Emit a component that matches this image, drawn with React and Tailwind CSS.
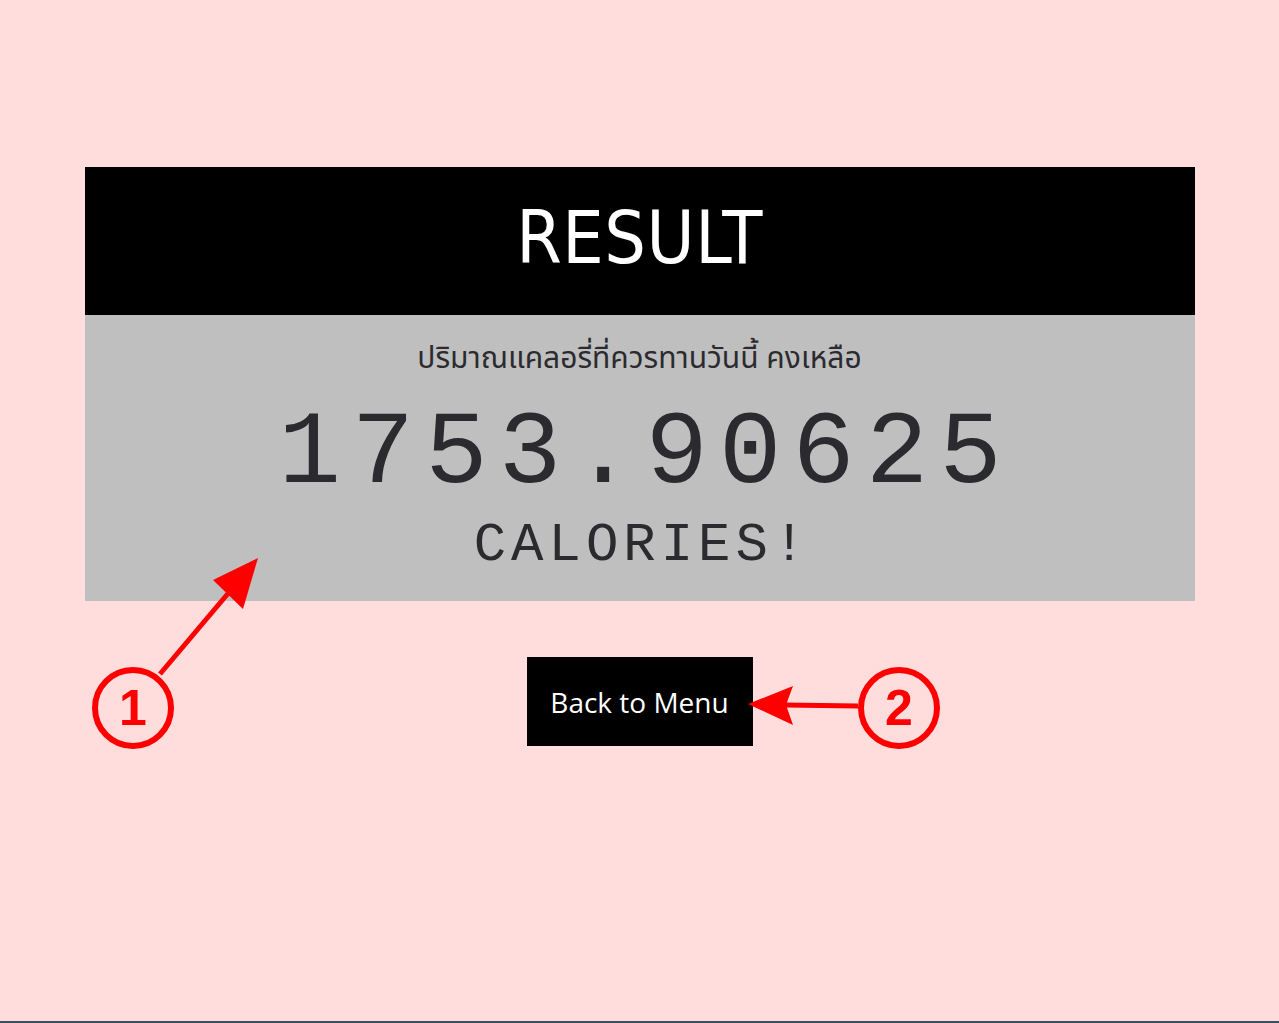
import { useState } from 'react'

const result = 1753.90625

function Marker({ n, className }) {
  return (
    <div className={`absolute flex h-[82px] w-[82px] items-center justify-center rounded-full border-[6px] border-[#ff0000] ${className}`}>
      <span className="text-[50px] font-bold leading-none text-[#ff0000]" style={{ fontFamily: '"Liberation Sans", sans-serif' }}>{n}</span>
    </div>
  )
}

export default function App() {
  const [calories] = useState(result)

  return (
    <div className="relative flex h-[1023px] flex-col bg-[#ffdddd]">
      <div className="flex-1 pt-[167px]">
        <div className="mx-auto w-[1110px]">
          <div className="flex h-[148px] items-center justify-center bg-black pb-[8px]">
            <h1 className="text-[73px] font-extralight leading-none tracking-[0.5px] text-white font-stretch-condensed" style={{ fontFamily: '"DejaVu Sans Condensed", "DejaVu Sans", sans-serif' }}>RESULT</h1>
          </div>
          <div className="flex h-[286px] flex-col items-center bg-[#bfbfbf] pt-[20px] text-[#2b2b2f]">
            <p className="text-[30px] leading-[44px]" style={{ fontFamily: '"Noto Sans", "Noto Sans Thai", sans-serif' }}>ปริมาณแคลอรี่ที่ควรทานวันนี้ คงเหลือ</p>
            <p className="mt-[20px] pl-[12px] text-[104px] leading-[110px] tracking-[11px]" style={{ fontFamily: '"Liberation Mono", monospace' }}>{calories}</p>
            <p className="mt-[7px] pl-[5px] text-[54px] leading-[60px] tracking-[5px]" style={{ fontFamily: '"Liberation Mono", monospace' }}>CALORIES!</p>
          </div>
        </div>

        <div className="mt-[56px] flex justify-center">
          <button className="h-[89px] w-[226px] bg-black text-[28px] text-white" style={{ fontFamily: '"Open Sans", "Noto Sans", sans-serif' }}>Back to Menu</button>
        </div>
      </div>
      <div className="h-[2px] bg-[#3d4f5c]" />

      <svg className="pointer-events-none absolute inset-0" width="1279" height="1023">
        <line x1="160" y1="674" x2="236" y2="584" stroke="#ff0000" strokeWidth="5" />
        <polygon points="258,558 213,580 243,609" fill="#ff0000" />
        <line x1="858" y1="706" x2="785" y2="705" stroke="#ff0000" strokeWidth="5" />
        <polygon points="748,704 793,686 786,705 793,725" fill="#ff0000" />
      </svg>
      <Marker n="1" className="left-[92px] top-[667px]" />
      <Marker n="2" className="left-[858px] top-[667px]" />
    </div>
  )
}
